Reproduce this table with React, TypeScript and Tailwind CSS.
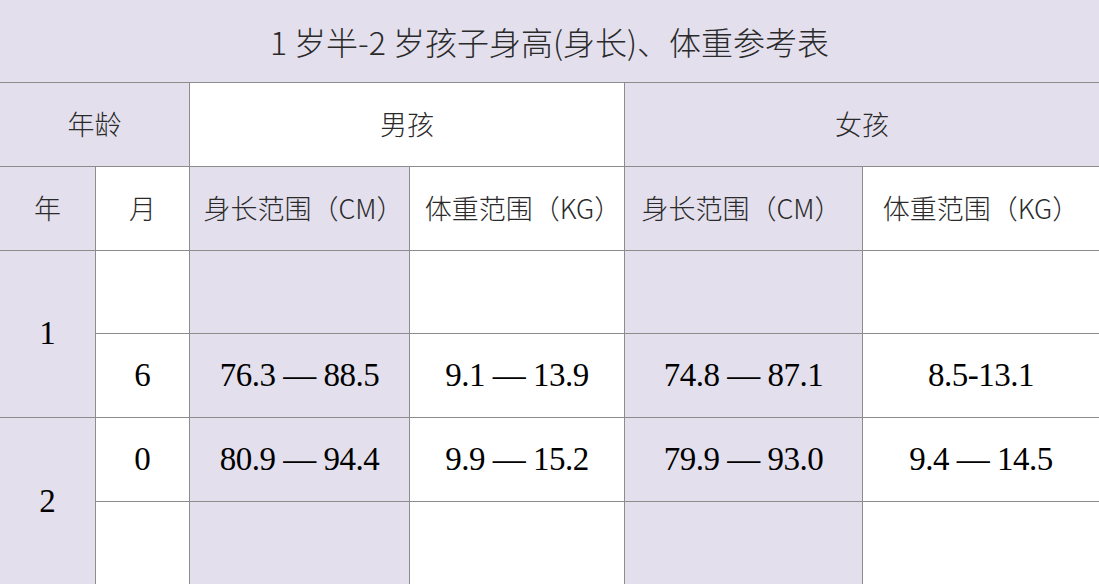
const cjk = "font-['Noto_Sans_CJK_SC','Noto_Sans',sans-serif] font-extralight";
const num = "font-['Liberation_Serif','Noto_Serif',serif]";

const lav = 'bg-[#e3dfec]';
const white = 'bg-white';

function Cell({ children, className = '' }: { children?: React.ReactNode; className?: string }) {
  return <div className={`flex items-center justify-center ${className}`}>{children}</div>;
}

const rows = [
  { month: '', values: ['', '', '', ''] },
  { month: '6', values: ['76.3 — 88.5', '9.1 — 13.9', '74.8 — 87.1', '8.5-13.1'] },
  { month: '0', values: ['80.9 — 94.4', '9.9 — 15.2', '79.9 — 93.0', '9.4 — 14.5'] },
  { month: '', values: ['', '', '', ''] },
];

export default function App() {
  return (
    <div className="w-[1099px] h-[584px] overflow-hidden bg-white">
      <div className="grid grid-cols-[95px_93px_219px_214px_237px_1fr] grid-rows-[82px_83px_83px_82px_83px_83px_83px] gap-px bg-[#8c8c8c] text-[#2a2a2a]">
        <Cell className={`col-span-6 ${lav} ${cjk} text-[32px]`}>1 岁半-2 岁孩子身高(身长)、体重参考表</Cell>

        <Cell className={`col-span-2 ${lav} ${cjk} text-[27px]`}>年龄</Cell>
        <Cell className={`col-span-2 ${white} ${cjk} text-[27px]`}>男孩</Cell>
        <Cell className={`col-span-2 ${lav} ${cjk} text-[27px]`}>女孩</Cell>

        <Cell className={`${lav} ${cjk} text-[27px]`}>年</Cell>
        <Cell className={`${white} ${cjk} text-[27px]`}>月</Cell>
        <Cell className={`${lav} ${cjk} text-[27px] pl-2`}>身长范围（CM）</Cell>
        <Cell className={`${white} ${cjk} text-[27px] pl-3`}>体重范围（KG）</Cell>
        <Cell className={`${lav} ${cjk} text-[27px] pr-1`}>身长范围（CM）</Cell>
        <Cell className={`${white} ${cjk} text-[27px]`}>体重范围（KG）</Cell>

        <Cell className={`row-span-2 col-start-1 row-start-4 ${lav} ${num} text-[33px] text-black`}>1</Cell>
        <Cell className={`row-span-2 col-start-1 row-start-6 ${lav} ${num} text-[33px] text-black`}>2</Cell>

        {rows.map((r, i) => (
          <div key={i} className="contents">
            <Cell className={`col-start-2 ${white} ${num} text-[33px] text-black`}>{r.month}</Cell>
            {r.values.map((v, j) => (
              <Cell key={j} className={`${j % 2 === 0 ? lav : white} ${num} text-[33px] text-black tracking-[-0.5px]`}>
                {v}
              </Cell>
            ))}
          </div>
        ))}
      </div>
    </div>
  );
}
